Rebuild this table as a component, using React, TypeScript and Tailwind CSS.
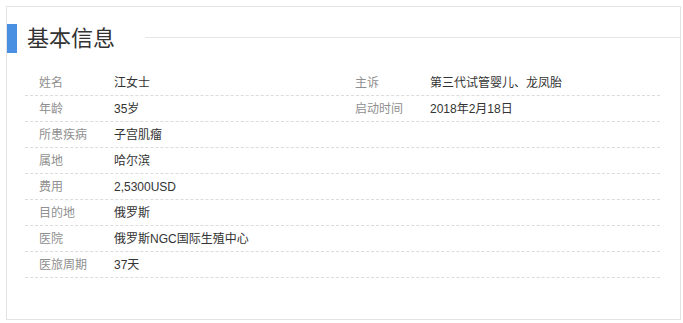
import React from "react";

const font = { fontFamily: '"Liberation Sans", "Noto Sans CJK SC", sans-serif' };

type Cell = { label: string; value: string };
const rows: (Cell | [Cell, Cell])[] = [
  [
    { label: "姓名", value: "江女士" },
    { label: "主诉", value: "第三代试管婴儿、龙凤胎" },
  ],
  [
    { label: "年龄", value: "35岁" },
    { label: "启动时间", value: "2018年2月18日" },
  ],
  { label: "所患疾病", value: "子宫肌瘤" },
  { label: "属地", value: "哈尔滨" },
  { label: "费用", value: "2,5300USD" },
  { label: "目的地", value: "俄罗斯" },
  { label: "医院", value: "俄罗斯NGC国际生殖中心" },
  { label: "医旅周期", value: "37天" },
];

function Pair({ c }: { c: Cell }) {
  return (
    <div className="flex items-center">
      <div className="w-[89px] pl-[14px] text-[#8f8f8f]">{c.label}</div>
      <div className="text-[#333333]">{c.value}</div>
    </div>
  );
}

export default function App() {
  return (
    <div className="w-[683px] h-[323px] bg-white pt-[6px] pl-[6px]" style={font}>
      <div className="w-[675px] h-[314px] border border-[#e3e3e3] bg-white">
        <div className="flex items-center mt-[17px] h-[29px]">
          <div className="w-[10px] h-[29px] bg-[#4a90e2]" />
          <div className="ml-[10px] text-[22px] leading-[29px] text-[#333333] w-[118px]">基本信息</div>
          <div className="flex-1 h-px bg-[#e6e6e6] -mt-[3px]" />
        </div>
        <div className="ml-[18px] w-[635px] mt-[17px] text-[12px]">
          {rows.map((r, i) => (
            <div
              key={i}
              className="flex items-center h-[26px] border-b border-dashed border-[#dcdcdc]"
            >
              {Array.isArray(r) ? (
                <>
                  <div className="w-[316px]">
                    <Pair c={r[0]} />
                  </div>
                  <div className="flex-1">
                    <Pair c={r[1]} />
                  </div>
                </>
              ) : (
                <Pair c={r} />
              )}
            </div>
          ))}
        </div>
      </div>
    </div>
  );
}
